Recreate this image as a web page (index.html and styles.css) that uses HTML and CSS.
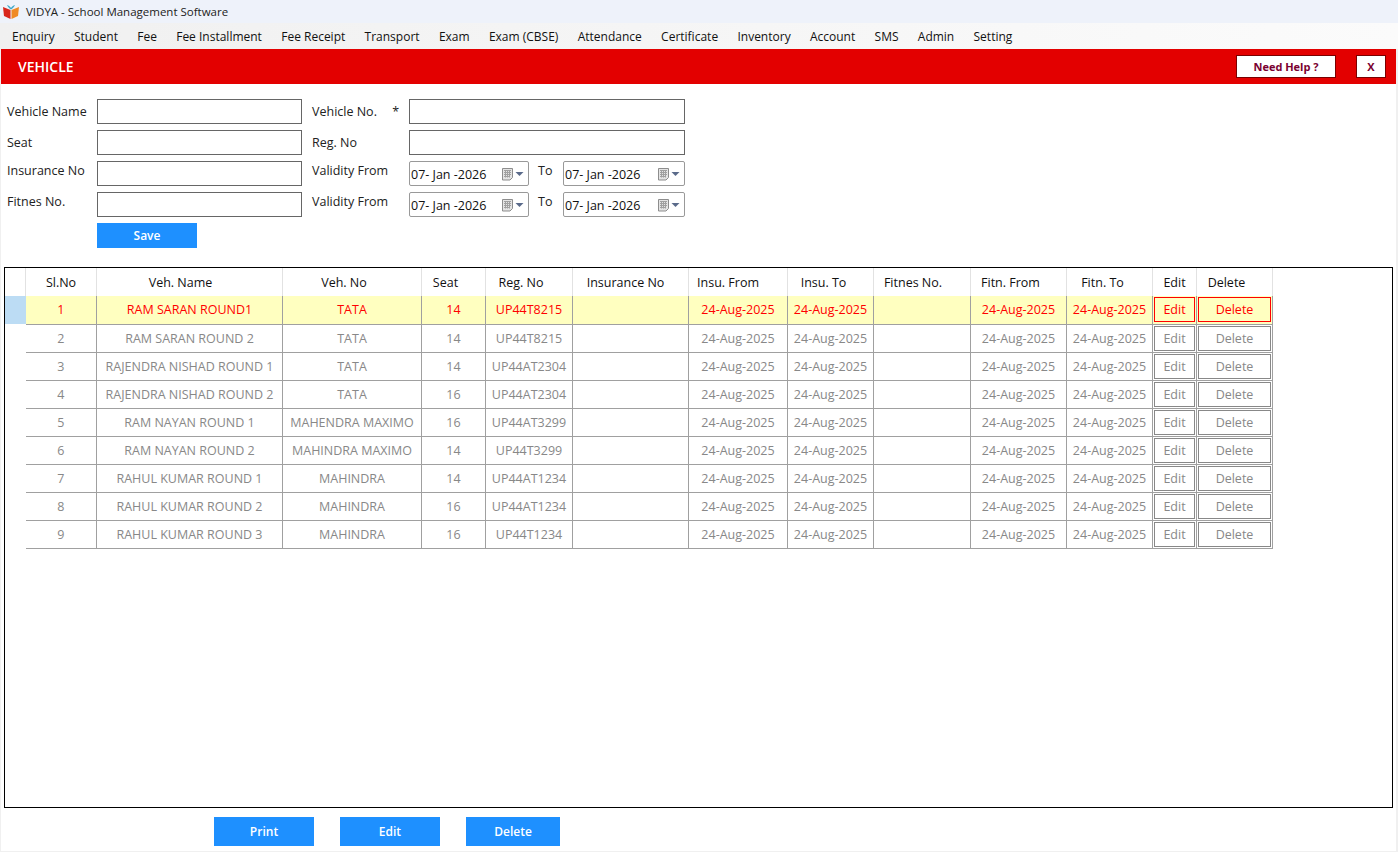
FILE: index.html
```html
<!DOCTYPE html>
<html lang="en">
<head>
    <meta charset="UTF-8">
    <meta name="viewport" content="width=device-width, initial-scale=1.0">
    <title>VIDYA - School Management Software</title>
    <link rel="stylesheet" href="styles.css">
</head>
<body>
    <svg class="icon-defs" width="0" height="0">
        <symbol id="cal" viewBox="0 0 24 14">
            <path d="M1.5 1.5h10v9l-2.5 2.5h-7.500z" fill="#e4e4e4" stroke="#8d8d8d"/>
            <path d="M3 3.500h7M3 5.500h7M3 7.500h7M3 9.500h6M4.500 3v7.500M6.500 3v7.500M8.500 3v7.500" stroke="#a0a0a0" stroke-width="1"/>
            <path d="M14.500 5h8l-4 4z" fill="#5a6a8a"/>
        </symbol>
    </svg>

    <div class="titlebar">
        <svg class="logo" width="18" height="15" viewBox="0 0 18 15">
            <path d="M1 3l7.500 3v9L2 12z" fill="#d8261c"/>
            <path d="M17 3l-7.500 3v9l6.500-3z" fill="#f08a24"/>
            <path d="M5 1c2 .5 3.200 1.600 4 3 .8-1.400 2-2.500 4-3-1 2-2.500 3.500-4 4.500C7.500 4.500 6 3 5 1z" fill="#3fa9c9"/>
        </svg>
        <span>VIDYA - School Management Software</span>
    </div>

    <nav class="menubar">
        <a>Enquiry</a>
        <a>Student</a>
        <a>Fee</a>
        <a>Fee Installment</a>
        <a>Fee Receipt</a>
        <a>Transport</a>
        <a>Exam</a>
        <a>Exam (CBSE)</a>
        <a>Attendance</a>
        <a>Certificate</a>
        <a>Inventory</a>
        <a>Account</a>
        <a>SMS</a>
        <a>Admin</a>
        <a>Setting</a>
    </nav>

    <div class="page">
        <div class="page-head">
            <h1>VEHICLE</h1>
            <button class="head-btn help-btn">Need Help ?</button>
            <button class="head-btn close-btn">X</button>
        </div>

        <form class="vehicle-form">
            <label>Vehicle Name</label>
            <input type="text" class="field">
            <label class="second">Vehicle No. <span class="req">*</span></label>
            <input type="text" class="field">

            <label>Seat</label>
            <input type="text" class="field">
            <label class="second">Reg. No</label>
            <input type="text" class="field">

            <label class="up">Insurance No</label>
            <input type="text" class="field">
            <label class="second up">Validity From</label>
            <div class="date-pair">
                <div class="date-box"><span>07- Jan -2026</span><svg width="24" height="14"><use href="#cal"/></svg></div>
                <span class="to">To</span>
                <div class="date-box wide"><span>07- Jan -2026</span><svg width="24" height="14"><use href="#cal"/></svg></div>
            </div>

            <label class="up">Fitnes No.</label>
            <input type="text" class="field">
            <label class="second up">Validity From</label>
            <div class="date-pair">
                <div class="date-box"><span>07- Jan -2026</span><svg width="24" height="14"><use href="#cal"/></svg></div>
                <span class="to">To</span>
                <div class="date-box wide"><span>07- Jan -2026</span><svg width="24" height="14"><use href="#cal"/></svg></div>
            </div>

            <button type="button" class="blue-btn save-btn">Save</button>
        </form>

        <div class="grid-box">
            <table class="grid">
                <thead>
                    <tr>
                        <th class="c-row"></th>
                        <th class="c-sl">Sl.No</th>
                        <th class="c-name">Veh. Name</th>
                        <th class="c-no">Veh. No</th>
                        <th class="c-seat">Seat</th>
                        <th class="c-reg">Reg. No</th>
                        <th class="c-ins">Insurance No</th>
                        <th class="c-from">Insu. From</th>
                        <th class="c-to">Insu. To</th>
                        <th class="c-fit">Fitnes No.</th>
                        <th class="c-ffrom">Fitn. From</th>
                        <th class="c-fto">Fitn. To</th>
                        <th class="c-edit">Edit</th>
                        <th class="c-del">Delete</th>
                    </tr>
                </thead>
                <tbody>
                    <tr class="selected">
                        <td class="row-head"></td><td>1</td><td>RAM SARAN ROUND1</td><td>TATA</td><td>14</td><td>UP44T8215</td><td></td><td>24-Aug-2025</td><td>24-Aug-2025</td><td></td><td>24-Aug-2025</td><td>24-Aug-2025</td>
                        <td class="act"><span>Edit</span></td><td class="act"><span>Delete</span></td>
                    </tr>
                    <tr>
                        <td class="row-head"></td><td>2</td><td>RAM SARAN ROUND 2</td><td>TATA</td><td>14</td><td>UP44T8215</td><td></td><td>24-Aug-2025</td><td>24-Aug-2025</td><td></td><td>24-Aug-2025</td><td>24-Aug-2025</td>
                        <td class="act"><span>Edit</span></td><td class="act"><span>Delete</span></td>
                    </tr>
                    <tr>
                        <td class="row-head"></td><td>3</td><td>RAJENDRA NISHAD ROUND 1</td><td>TATA</td><td>14</td><td>UP44AT2304</td><td></td><td>24-Aug-2025</td><td>24-Aug-2025</td><td></td><td>24-Aug-2025</td><td>24-Aug-2025</td>
                        <td class="act"><span>Edit</span></td><td class="act"><span>Delete</span></td>
                    </tr>
                    <tr>
                        <td class="row-head"></td><td>4</td><td>RAJENDRA NISHAD ROUND 2</td><td>TATA</td><td>16</td><td>UP44AT2304</td><td></td><td>24-Aug-2025</td><td>24-Aug-2025</td><td></td><td>24-Aug-2025</td><td>24-Aug-2025</td>
                        <td class="act"><span>Edit</span></td><td class="act"><span>Delete</span></td>
                    </tr>
                    <tr>
                        <td class="row-head"></td><td>5</td><td>RAM NAYAN ROUND 1</td><td>MAHENDRA MAXIMO</td><td>16</td><td>UP44AT3299</td><td></td><td>24-Aug-2025</td><td>24-Aug-2025</td><td></td><td>24-Aug-2025</td><td>24-Aug-2025</td>
                        <td class="act"><span>Edit</span></td><td class="act"><span>Delete</span></td>
                    </tr>
                    <tr>
                        <td class="row-head"></td><td>6</td><td>RAM NAYAN ROUND 2</td><td>MAHINDRA MAXIMO</td><td>14</td><td>UP44T3299</td><td></td><td>24-Aug-2025</td><td>24-Aug-2025</td><td></td><td>24-Aug-2025</td><td>24-Aug-2025</td>
                        <td class="act"><span>Edit</span></td><td class="act"><span>Delete</span></td>
                    </tr>
                    <tr>
                        <td class="row-head"></td><td>7</td><td>RAHUL KUMAR ROUND 1</td><td>MAHINDRA</td><td>14</td><td>UP44AT1234</td><td></td><td>24-Aug-2025</td><td>24-Aug-2025</td><td></td><td>24-Aug-2025</td><td>24-Aug-2025</td>
                        <td class="act"><span>Edit</span></td><td class="act"><span>Delete</span></td>
                    </tr>
                    <tr>
                        <td class="row-head"></td><td>8</td><td>RAHUL KUMAR ROUND 2</td><td>MAHINDRA</td><td>16</td><td>UP44AT1234</td><td></td><td>24-Aug-2025</td><td>24-Aug-2025</td><td></td><td>24-Aug-2025</td><td>24-Aug-2025</td>
                        <td class="act"><span>Edit</span></td><td class="act"><span>Delete</span></td>
                    </tr>
                    <tr>
                        <td class="row-head"></td><td>9</td><td>RAHUL KUMAR ROUND 3</td><td>MAHINDRA</td><td>16</td><td>UP44T1234</td><td></td><td>24-Aug-2025</td><td>24-Aug-2025</td><td></td><td>24-Aug-2025</td><td>24-Aug-2025</td>
                        <td class="act"><span>Edit</span></td><td class="act"><span>Delete</span></td>
                    </tr>
                </tbody>
            </table>
        </div>

        <div class="bottom-bar">
            <button class="blue-btn">Print</button>
            <button class="blue-btn">Edit</button>
            <button class="blue-btn del-btn">Delete</button>
        </div>
    </div>
</body>
</html>
```

FILE: styles.css
```css
html, body {
    margin: 0;
    height: 852px;
    overflow: hidden;
}

body {
    background-color: #f0f0f0;
    font-family: "Open Sans", "Noto Sans", sans-serif;
    font-size: 12.5px;
    color: #222;
}

.icon-defs {
    display: block;
    position: absolute;
}

.titlebar {
    display: flex;
    align-items: center;
    gap: 6px;
    height: 23px;
    padding-left: 2px;
    background-color: #eef2fa;
    font-size: 11.500px;
    color: #222;
}

.menubar {
    display: flex;
    gap: 19.300px;
    align-items: center;
    height: 26px;
    padding-left: 12px;
    background: linear-gradient(to right, #f0f0f0, #fbfbfb);
    font-size: 12px;
    color: #111;
    white-space: nowrap;
}

.page {
    margin: 0 2px 0 1px;
    height: 802px;
    background-color: #fff;
}

.page-head {
    display: flex;
    align-items: center;
    height: 35px;
    padding: 0 10px 0 17px;
    background-color: #e30000;
}

.page-head h1 {
    flex: 1;
    margin: 0;
    font-size: 14px;
    font-weight: 600;
    color: #fff;
}

.head-btn {
    height: 23px;
    padding: 0;
    border: 1px solid #7a0000;
    background-color: #fff;
    color: #7a0030;
    font-family: inherit;
    font-size: 11px;
    font-weight: 700;
}

.help-btn {
    width: 100px;
    margin-right: 20px;
}

.close-btn {
    width: 30px;
}

/* top form */
.vehicle-form {
    display: grid;
    grid-template-columns: 90px 205px 107px 276px;
    grid-auto-rows: 25px;
    row-gap: 6px;
    align-items: center;
    padding: 15px 0 0 6px;
}

.vehicle-form label {
    color: #222;
}

.vehicle-form .second {
    padding-left: 10px;
}

.vehicle-form .up {
    margin-top: -6px;
}

.req {
    margin-left: 12px;
}

.field {
    box-sizing: border-box;
    width: 100%;
    height: 25px;
    border: 1px solid #666;
    background-color: #fff;
}

.date-pair {
    display: flex;
    align-items: center;
}

.date-box {
    box-sizing: border-box;
    display: flex;
    align-items: center;
    justify-content: space-between;
    width: 120px;
    height: 25px;
    padding: 1px 3px 0 1px;
    border: 1px solid #999;
    border-radius: 2px;
    color: #111;
}

.date-box.wide {
    width: 122px;
}

.to {
    width: 34px;
    margin-top: -6px;
    padding-left: 9px;
    box-sizing: border-box;
}

.blue-btn {
    width: 100px;
    border: none;
    background-color: #1e90ff;
    color: #fff;
    font-family: inherit;
    font-size: 12px;
    font-weight: 600;
}

.save-btn {
    grid-column: 2;
    height: 25px;
}

/* data grid */
.grid-box {
    box-sizing: border-box;
    width: 1389px;
    height: 541px;
    margin: 19px 0 0 3px;
    border: 1px solid #000;
}

.grid {
    table-layout: fixed;
    width: 1265px;
    border-collapse: collapse;
}

.grid th {
    height: 28px;
    padding: 0;
    border-right: 1px solid #e2e2e2;
    font-weight: 400;
    text-align: center;
    color: #111;
}

.grid td {
    box-sizing: border-box;
    height: 28px;
    padding: 0;
    border-right: 1px solid #a0a0a0;
    border-bottom: 1px solid #a0a0a0;
    text-align: center;
    color: #888;
    white-space: nowrap;
}

.grid .row-head {
    border: none;
}

.c-row { width: 20px; }
.c-sl { width: 70px; }
.c-name { width: 186px; padding-right: 18px !important; box-sizing: border-box; }
.c-no { width: 139px; padding-right: 16px !important; box-sizing: border-box; }
.c-seat { width: 64px; padding-right: 16px !important; box-sizing: border-box; }
.c-reg { width: 87px; padding-right: 16px !important; box-sizing: border-box; }
.c-ins { width: 116px; padding-right: 10px !important; box-sizing: border-box; }
.c-from { width: 99px; padding-right: 20px !important; box-sizing: border-box; }
.c-to { width: 86px; padding-right: 14px !important; box-sizing: border-box; }
.c-fit { width: 97px; padding-right: 18px !important; box-sizing: border-box; }
.c-ffrom { width: 96px; padding-right: 16px !important; box-sizing: border-box; }
.c-fto { width: 86px; padding-right: 14px !important; box-sizing: border-box; }
.c-edit { width: 43px; }
.c-del { width: 76px; padding-right: 16px !important; box-sizing: border-box; }

.selected td {
    background-color: #ffffc0;
    color: #f00;
}

.selected .row-head {
    background-color: #bcdcf4;
}

.act {
    padding: 1px !important;
}

.act span {
    box-sizing: border-box;
    display: block;
    height: 25px;
    line-height: 23px;
    border: 1px solid #888;
}

.selected .act span {
    border-color: #f00;
}

/* bottom buttons */
.bottom-bar {
    display: flex;
    gap: 26px;
    padding: 9px 0 0 213px;
}

.bottom-bar .blue-btn {
    height: 29px;
}

.bottom-bar .del-btn {
    width: 94px;
}
```
